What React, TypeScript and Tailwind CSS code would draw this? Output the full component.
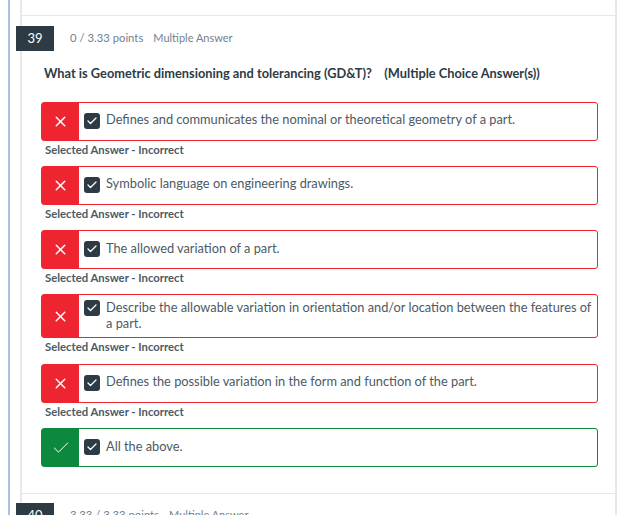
import { Check, X } from "lucide-react";

type Answer = {
  text: string;
  correct?: boolean;
  rowClass: string;
  textClass?: string;
  labelClass?: string;
};

const answers: Answer[] = [
  { text: "Defines and communicates the nominal or theoretical geometry of a part.", rowClass: "h-[39px]", textClass: "-mt-px", labelClass: "h-[25px]" },
  { text: "Symbolic language on engineering drawings.", rowClass: "h-[39px]", textClass: "-mt-px", labelClass: "h-[25px]" },
  { text: "The allowed variation of a part.", rowClass: "h-[39px]", labelClass: "h-[25px]" },
  {
    text: "Describe the allowable variation in orientation and/or location between the features of a part.",
    rowClass: "h-[44px]",
    labelClass: "h-[26px]",
  },
  { text: "Defines the possible variation in the form and function of the part.", rowClass: "h-[39px]", textClass: "-mt-px", labelClass: "h-[25px]" },
  { text: "All the above.", correct: true, rowClass: "h-[39px]" },
];

function AnswerRow({ answer }: { answer: Answer }) {
  const border = answer.correct ? "border-[#0b8a3e]" : "border-[#ee2530]";
  const fill = answer.correct ? "bg-[#0b8a3e]" : "bg-[#ee2530]";

  return (
    <div>
      <div className={`flex rounded-[3px] border ${border} ${answer.rowClass}`}>
        <div className={`flex w-[37px] shrink-0 items-center justify-center ${fill}`}>
          {answer.correct ? (
            <Check className="h-5 w-5 text-white" strokeWidth={1.2} />
          ) : (
            <X className="h-[17px] w-[17px] text-white" strokeWidth={2} />
          )}
        </div>
        <div className="flex min-w-0 flex-1 items-center pl-[5px] pr-1 pb-[3px]">
          <div className="flex items-start gap-[6px]">
            <div className="mt-px flex h-4 w-4 shrink-0 items-center justify-center rounded-[3px] bg-[#2d3b45]">
              <Check className="h-3 w-3 text-white" strokeWidth={2.5} />
            </div>
            <p className={`text-[12.8px] leading-4 text-[#4b5a65] ${answer.textClass ?? ""}`}>{answer.text}</p>
          </div>
        </div>
      </div>
      {answer.labelClass && (
        <div className={`pl-[4px] pt-[2px] text-[11.3px] font-bold leading-[14px] text-[#4b5a65] ${answer.labelClass}`}>
          Selected Answer - Incorrect
        </div>
      )}
    </div>
  );
}

export default function App() {
  return (
    <div className="flex h-[515px] w-[626px] overflow-hidden bg-white font-['Lato',sans-serif]">
      <div className="ml-2 h-full w-[2px] shrink-0 bg-[#a6c4e2]" />
      <div className="ml-[10px] h-full w-[597px] shrink-0 border-x-2 border-[#e8e8e8] pt-[15px]">
        <div className="h-[479px] border-b border-t border-[#e8e8e8]">
          <div className="flex items-center pt-[10px]">
            <div className="-ml-[6px] flex h-[25px] w-[38px] items-center justify-center bg-[#2d3b45] text-[13px] text-white">
              39
            </div>
            <span className="ml-4 text-[11.3px] text-[#73818c]">0 / 3.33 points</span>
            <span className="ml-[10px] text-[11px] text-[#73818c]">Multiple Answer</span>
          </div>
          <h2 className="ml-[22px] mt-[13px] whitespace-pre text-[12.8px] font-bold leading-[18px] text-[#2d3b45]">
            What is Geometric dimensioning and tolerancing (GD&amp;T)?    (Multiple Choice Answer(s))
          </h2>
          <div className="ml-[19px] mt-[20px] w-[557px]">
            {answers.map((answer) => (
              <AnswerRow key={answer.text} answer={answer} />
            ))}
          </div>
        </div>
        <div className="flex items-center pt-[9px]">
          <div className="-ml-[6px] flex h-[25px] w-[38px] items-center justify-center bg-[#2d3b45] text-[13px] text-white">
            40
          </div>
          <span className="ml-4 text-[11.3px] text-[#73818c]">3.33 / 3.33 points</span>
          <span className="ml-[10px] text-[11px] text-[#73818c]">Multiple Answer</span>
        </div>
      </div>
    </div>
  );
}
